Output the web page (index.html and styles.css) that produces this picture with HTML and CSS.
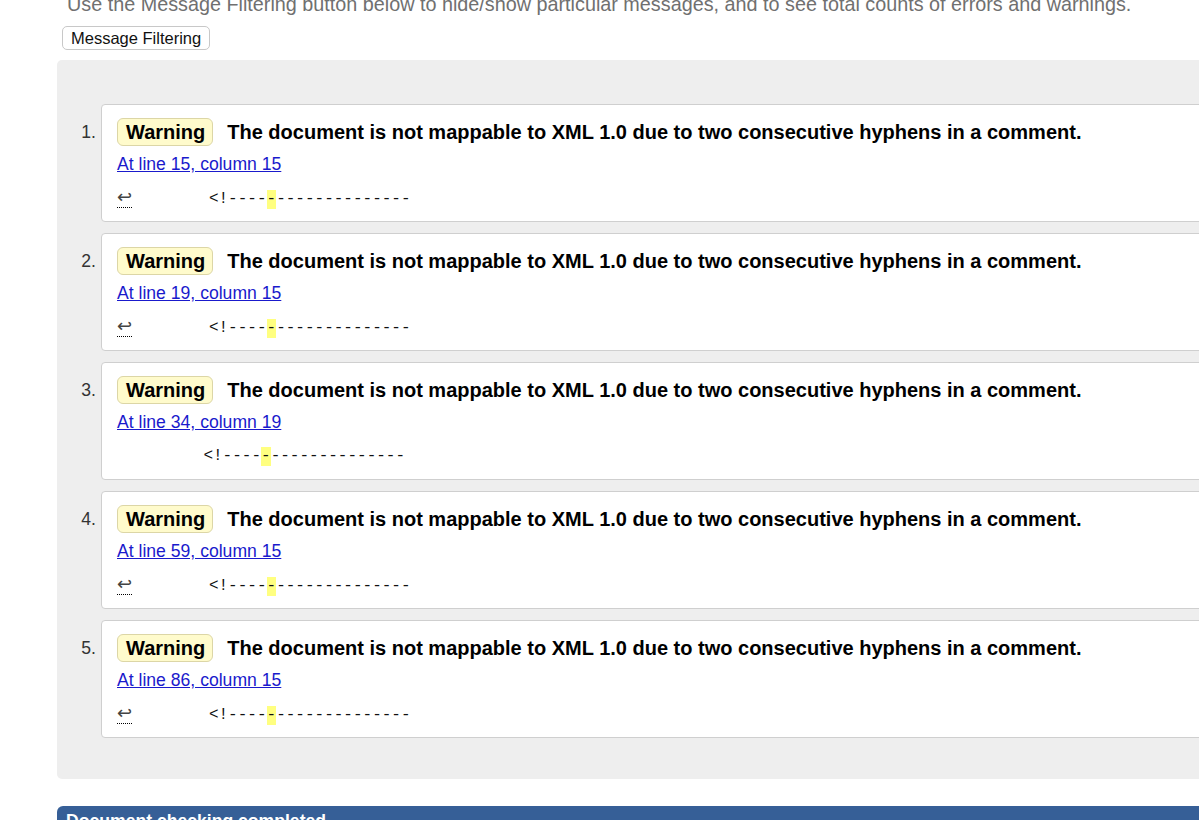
FILE: index.html
```html
<!DOCTYPE html>
<html lang="en">
<head>
<meta charset="utf-8">
<title>Nu Html Checker results</title>
<link rel="stylesheet" href="styles.css">
</head>
<body>
<div class="page">
  <p class="intro">Use the Message Filtering button below to hide/show particular messages, and to see total counts of errors and warnings.</p>
  <div class="filter-row"><button class="filter-btn" type="button">Message Filtering</button></div>
  <div class="results">
    <ol class="messages">
      <li class="item">
        <span class="num">1.</span>
        <div class="card">
          <p class="head"><strong class="badge">Warning</strong><span class="msg">The document is not mappable to XML 1.0 due to two consecutive hyphens in a comment.</span></p>
          <p class="loc"><a href="#" class="link">At line 15, column 15</a></p>
          <p class="extract"><code><b class="lf" title="Line break">↩</b>        &lt;!----<b class="hl">-</b>--------------</code></p>
        </div>
      </li>
      <li class="item">
        <span class="num">2.</span>
        <div class="card">
          <p class="head"><strong class="badge">Warning</strong><span class="msg">The document is not mappable to XML 1.0 due to two consecutive hyphens in a comment.</span></p>
          <p class="loc"><a href="#" class="link">At line 19, column 15</a></p>
          <p class="extract"><code><b class="lf" title="Line break">↩</b>        &lt;!----<b class="hl">-</b>--------------</code></p>
        </div>
      </li>
      <li class="item">
        <span class="num">3.</span>
        <div class="card">
          <p class="head"><strong class="badge">Warning</strong><span class="msg">The document is not mappable to XML 1.0 due to two consecutive hyphens in a comment.</span></p>
          <p class="loc"><a href="#" class="link">At line 34, column 19</a></p>
          <p class="extract"><code>         &lt;!----<b class="hl">-</b>--------------</code></p>
        </div>
      </li>
      <li class="item">
        <span class="num">4.</span>
        <div class="card">
          <p class="head"><strong class="badge">Warning</strong><span class="msg">The document is not mappable to XML 1.0 due to two consecutive hyphens in a comment.</span></p>
          <p class="loc"><a href="#" class="link">At line 59, column 15</a></p>
          <p class="extract"><code><b class="lf" title="Line break">↩</b>        &lt;!----<b class="hl">-</b>--------------</code></p>
        </div>
      </li>
      <li class="item">
        <span class="num">5.</span>
        <div class="card">
          <p class="head"><strong class="badge">Warning</strong><span class="msg">The document is not mappable to XML 1.0 due to two consecutive hyphens in a comment.</span></p>
          <p class="loc"><a href="#" class="link">At line 86, column 15</a></p>
          <p class="extract"><code><b class="lf" title="Line break">↩</b>        &lt;!----<b class="hl">-</b>--------------</code></p>
        </div>
      </li>
    </ol>
  </div>
  <h2 class="done">Document checking completed.</h2>
</div>
</body>
</html>
```

FILE: styles.css
```css
html, body {
  margin: 0;
  padding: 0;
  overflow: hidden;
  background: #fff;
}
body {
  font-family: "Liberation Sans", Arial, sans-serif;
  color: #000;
  width: 1199px;
  height: 820px;
}
.page {
  margin-top: -7px;
  padding-left: 57px;
  width: 1400px;
}
.intro {
  margin: 0 0 0 10px;
  font-size: 19.8px;
  line-height: 22px;
  color: #707070;
  white-space: nowrap;
}
.filter-row {
  margin: 11px 0 0 5px;
  height: 24px;
}
.filter-btn {
  font-family: "Liberation Sans", Arial, sans-serif;
  font-size: 16.5px;
  line-height: 18px;
  height: 24px;
  padding: 2px 8px;
  color: #111;
  background: #fff;
  border: 1px solid #c8c8c8;
  border-radius: 5px;
}
.results {
  margin-top: 10px;
  background: #eeeeee;
  border-radius: 5px;
  padding: 44px 0 41px 0;
}
.messages {
  list-style: none;
  margin: 0;
  padding: 0;
  display: flex;
  flex-direction: column;
  gap: 11px;
}
.item {
  display: flex;
  align-items: flex-start;
}
.num {
  width: 39px;
  padding-right: 5px;
  text-align: right;
  font-size: 17.6px;
  line-height: 20px;
  margin-top: 18px;
  color: #333;
}
.card {
  flex: 0 0 1240px;
  background: #fff;
  border: 1px solid #cfcfcf;
  border-radius: 4px;
  padding: 13px 15px 15px 15px;
}
.head {
  margin: 0;
  display: flex;
  align-items: center;
  height: 28px;
  white-space: nowrap;
}
.badge {
  display: inline-block;
  font-size: 20px;
  line-height: 26px;
  padding: 0 7px 0 8px;
  background: #fffbcc;
  border: 1px solid #dcd6a6;
  border-radius: 6px;
}
.msg {
  margin-left: 14px;
  font-weight: bold;
  font-size: 20px;
  line-height: 26px;
}
.loc {
  margin: 8px 0 0 0;
  font-size: 17.6px;
  line-height: 20px;
}
.link {
  color: #1a1acc;
  text-decoration: underline;
}
.extract {
  margin: 13px 0 0 0;
  line-height: 19px;
  height: 19px;
}
.extract code {
  font-family: "Liberation Mono", "DejaVu Sans Mono", monospace;
  font-size: 16px;
  line-height: 19px;
  white-space: pre;
  color: #111;
}
.lf {
  font-weight: normal;
  font-family: "DejaVu Sans", sans-serif;
  font-size: 18px;
  line-height: 19px;
  color: #444;
  border-bottom: 1px dotted #000;
  text-decoration: none;
}
.hl {
  font-weight: normal;
  background: #ffff80;
  display: inline-block;
}
.done {
  margin: 27px 0 0 0;
  background: #365f97;
  color: #fff;
  font-size: 17.6px;
  line-height: 20px;
  padding: 5px 9px;
  border-radius: 6px 6px 0 0;
  white-space: nowrap;
}
```
